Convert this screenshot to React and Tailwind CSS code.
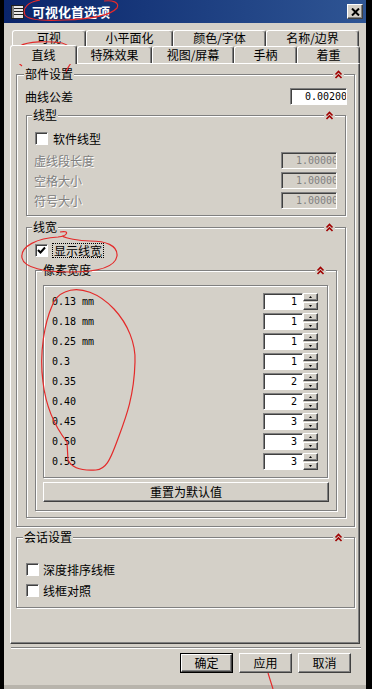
import React from 'react';

// 经典 Windows 立体边框
const raised =
  'border border-t-white border-l-white border-r-[#404040] border-b-[#404040] shadow-[inset_-1px_-1px_0_#808080]';
const sunken =
  'border border-t-[#808080] border-l-[#808080] border-r-white border-b-white shadow-[inset_1px_1px_0_#404040]';
const etched = 'border border-[#808080] shadow-[inset_1px_1px_0_#fff,1px_1px_0_#fff]';
const mono = "font-['DejaVu_Sans_Mono',monospace] text-[10px]";

function Chevron() {
  return (
    <svg width="9" height="9" viewBox="0 0 9 9">
      <path d="M1.5 4.5 L4.5 1.5 L7.5 4.5" fill="none" stroke="#a00000" strokeWidth="1.6" />
      <path d="M1.5 8 L4.5 5 L7.5 8" fill="none" stroke="#a00000" strokeWidth="1.6" />
    </svg>
  );
}

function Group({ title, titleLeft = 'left-[6px]', chevRight = 'right-[10px]', className = '', children }) {
  return (
    <div className={`relative ${etched} ${className}`}>
      <span className={`absolute -top-[9px] ${titleLeft} bg-[#d4d0c8] px-[1px] leading-[16px]`}>{title}</span>
      <span className={`absolute -top-[5px] ${chevRight} flex bg-[#d4d0c8] px-[1px]`}>
        <Chevron />
      </span>
      {children}
    </div>
  );
}

function CheckBox({ checked = false }) {
  return (
    <span className={`flex h-[13px] w-[13px] shrink-0 items-center justify-center bg-white ${sunken}`}>
      {checked && (
        <svg width="9" height="9" viewBox="0 0 9 9">
          <path d="M1 4 L3.5 6.5 L8 1.5" fill="none" stroke="#000" strokeWidth="2" />
        </svg>
      )}
    </span>
  );
}

function DisabledRow({ label }) {
  return (
    <div className="flex h-[17px] items-center pl-[7px] pr-[8px]">
      <span className="leading-[16px] text-[#808080] [text-shadow:1px_1px_0_#fff]">{label}</span>
      <div className={`ml-auto h-[17px] w-[56px] overflow-hidden whitespace-nowrap bg-[#d4d0c8] pl-[14px] leading-[15px] text-[#808080] ${mono} ${sunken}`}>
        1.00000
      </div>
    </div>
  );
}

function Spinner({ value }) {
  return (
    <div className="ml-auto flex h-[17px]">
      <div className={`h-[17px] w-[40px] bg-white pr-[5px] text-right leading-[15px] ${mono} ${sunken}`}>{value}</div>
      <div className="flex w-[15px] flex-col gap-[1px]">
        {['M0 2 L1.5 0 L3 2', 'M0 0 L1.5 2 L3 0'].map((d) => (
          <div key={d} className={`flex h-[8px] items-center justify-center bg-[#d4d0c8] ${raised}`}>
            <svg width="3" height="2" viewBox="0 0 3 2">
              <path d={d} fill="#000" />
            </svg>
          </div>
        ))}
      </div>
    </div>
  );
}

const widths = [
  ['0.13 mm', 1],
  ['0.18 mm', 1],
  ['0.25 mm', 1],
  ['0.3', 1],
  ['0.35', 2],
  ['0.40', 2],
  ['0.45', 3],
  ['0.50', 3],
  ['0.55', 3],
];

function Tab({ label, w, selected = false, h = 'h-[17px] pb-[2px]' }) {
  return (
    <div
      className={`${w} ${selected ? 'relative z-10 -mb-[1px] h-[19px] pb-[1px]' : h} flex shrink-0 items-center justify-center rounded-t-[3px] border-l border-t border-r border-l-white border-t-white border-r-[#404040] bg-[#d4d0c8] leading-[14px] shadow-[inset_-1px_0_0_#808080]`}
    >
      {label}
    </div>
  );
}

function Button({ label, isDefault = false }) {
  const btn = (
    <div className={`flex h-full w-full items-center justify-center bg-[#d4d0c8] leading-[14px] ${raised}`}>{label}</div>
  );
  return isDefault ? (
    <div className="h-[20px] w-[53px] border border-black">{btn}</div>
  ) : (
    <div className="h-[20px] w-[53px]">{btn}</div>
  );
}

function Annotations() {
  return (
    <svg className="pointer-events-none absolute left-0 top-0" width="372" height="689" viewBox="0 0 372 689">
      <g fill="none" stroke="#e42a2a" strokeWidth="1.2">
        <path d="M40 0 C28 2, 22 8, 25 15 C28 20, 45 21, 65 20 C90 19, 110 16, 117 8 C120 2, 112 0, 104 1" />
        <path d="M22 66 C14 60, 13 52, 20 46 C28 41, 48 41, 62 43 C73 46, 76 56, 71 63 C68 68, 66 70, 66 72" />
        <path d="M60 232 C70 230, 68 236, 58 237 C38 238, 20 246, 22 258 C24 268, 45 272, 70 272 C95 272, 115 268, 117 256 C118 245, 105 241, 90 241 C78 241, 66 238, 62 236" />
        <path d="M65 292 C80 285, 100 294, 114 309 C128 324, 136 344, 135 362 C134 400, 124 422, 116 444 C110 460, 106 469, 96 470 C82 471, 72 468, 68 460 L67 442 C56 428, 46 408, 43 382 C39 352, 45 322, 52 306 C55 298, 60 294, 65 292" />
        <path d="M268 673 L273 689" />
      </g>
    </svg>
  );
}

export default function App() {
  return (
    <div className="relative h-[689px] w-[372px] overflow-hidden bg-black pl-[4px] pr-[6px] font-['Noto_Sans_CJK_SC',sans-serif] text-[12px] text-black">
      <div className="flex h-full flex-col bg-[#d4d0c8]">
        {/* 标题栏 */}
        <div className="flex h-[23px] shrink-0 items-center bg-linear-to-r from-[#0a246a] to-[#2f5594]">
          <svg className="ml-[6px]" width="16" height="16" viewBox="0 0 16 16">
            <rect x="1.5" y="1.5" width="12" height="13" fill="#e8e8e8" stroke="#202020" />
            <rect x="2" y="2" width="2" height="12" fill="#808080" />
            <path d="M4 4.5 H13 M4 7.5 H13 M4 10.5 H13" stroke="#202020" />
          </svg>
          <span className="ml-[6px] text-[13px] font-bold leading-[16px] text-white">可视化首选项</span>
          <div className={`ml-auto mr-[3px] flex h-[15px] w-[16px] items-center justify-center bg-[#d4d0c8] ${raised}`}>
            <svg width="9" height="8" viewBox="0 0 9 8">
              <path d="M1 0.5 L8 7.5 M8 0.5 L1 7.5" stroke="#000" strokeWidth="2" />
            </svg>
          </div>
        </div>

        {/* 选项卡 */}
        <div className="mt-[7px] flex pl-[8px]">
          <Tab label="可视" w="w-[74px]" />
          <Tab label="小平面化" w="w-[87px]" />
          <Tab label="颜色/字体" w="w-[93px]" />
          <Tab label="名称/边界" w="w-[93px]" />
        </div>
        <div className="-mt-[2px] flex h-[18px] items-end pl-[6px]">
          <Tab label="直线" w="w-[67px]" selected />
          <Tab label="特殊效果" w="w-[75px]" h="h-[17px]" />
          <Tab label="视图/屏幕" w="w-[82px]" h="h-[17px]" />
          <Tab label="手柄" w="w-[63px]" h="h-[17px]" />
          <Tab label="着重" w="w-[63px]" h="h-[17px]" />
        </div>

        {/* 面板 */}
        <div className="ml-[6px] h-[581px] w-[350px] shrink-0 border border-b-[#404040] border-l-white border-r-[#404040] border-t-white pl-[5px] pt-[10px] shadow-[inset_-1px_-1px_0_#808080]">
          <Group title="部件设置" titleLeft="left-[7px]" chevRight="right-[10px]" className="h-[453px] w-[339px]">
            <div className="mt-[13px] flex h-[17px] items-center pl-[8px] pr-[7px]">
              <span className="leading-[16px]">曲线公差</span>
              <div className={`ml-auto h-[17px] w-[57px] overflow-hidden whitespace-nowrap bg-white pl-[14px] leading-[15px] ${mono} ${sunken}`}>
                0.00200
              </div>
            </div>

            <Group title="线型" titleLeft="left-[5px]" chevRight="right-[10px]" className="ml-[9px] mt-[10px] h-[101px] w-[320px]">
              <div className="mt-[16px] flex items-center gap-[5px] pl-[8px]">
                <CheckBox />
                <span className="leading-[13px]">软件线型</span>
              </div>
              <div className="mt-[7px] flex flex-col gap-[3px]">
                <DisabledRow label="虚线段长度" />
                <DisabledRow label="空格大小" />
                <DisabledRow label="符号大小" />
              </div>
            </Group>

            <Group title="线宽" titleLeft="left-[5px]" chevRight="right-[10px]" className="ml-[9px] mt-[11px] h-[291px] w-[320px]">
              <div className="mt-[15px] flex h-[15px] items-center gap-[4px] pl-[8px]">
                <CheckBox checked />
                <span className="border border-dotted border-black px-[1px] leading-[13px]">显示线宽</span>
              </div>
              <Group title="像素宽度" titleLeft="left-[6px]" chevRight="right-[10px]" className="ml-[8px] mt-[12px] h-[241px] w-[302px]">
                <div className={`ml-[7px] mt-[14px] flex h-[193px] w-[285px] flex-col gap-[3px] pl-[8px] pr-[9px] pt-[7px] ${etched}`}>
                  {widths.map(([label, v]) => (
                    <div key={label} className="flex h-[17px] items-center">
                      <span className={`${mono} whitespace-pre leading-[12px]`}>{label}</span>
                      <Spinner value={v} />
                    </div>
                  ))}
                </div>
                <div className={`ml-[7px] mt-[4px] flex h-[20px] w-[286px] items-center justify-center bg-[#d4d0c8] leading-[14px] ${raised}`}>
                  重置为默认值
                </div>
              </Group>
            </Group>
          </Group>

          <Group title="会话设置" titleLeft="left-[6px]" chevRight="right-[10px]" className="mt-[10px] h-[71px] w-[339px]">
            <div className="mt-[25px] flex flex-col gap-[8px] pl-[9px]">
              <div className="flex items-center gap-[4px]">
                <CheckBox />
                <span className="leading-[13px]">深度排序线框</span>
              </div>
              <div className="flex items-center gap-[4px]">
                <CheckBox />
                <span className="leading-[13px]">线框对照</span>
              </div>
            </div>
          </Group>
        </div>

        {/* 底部按钮 */}
        <div className="ml-[7px] mt-[3px] h-[2px] w-[350px] border-b border-t border-b-white border-t-[#808080]" />
        <div className="mt-[4px] flex justify-end gap-[6px] pr-[15px]">
          <Button label="确定" isDefault />
          <Button label="应用" />
          <Button label="取消" />
        </div>
        <div className="mt-auto h-[4px] bg-[#b8b4ac]" />
      </div>
      <Annotations />
    </div>
  );
}
